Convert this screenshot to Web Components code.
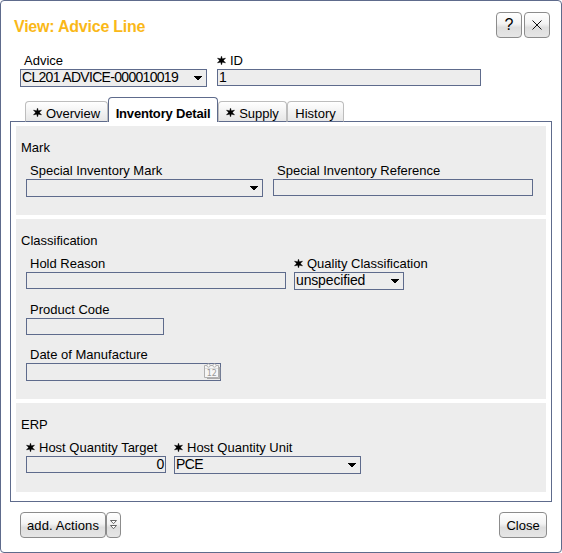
<!DOCTYPE html>
<html lang="en">
<head>
<meta charset="utf-8">
<title>View: Advice Line</title>
<style>
html,body{margin:0;height:100%;background:#fff}
body{font:13px/16px "Liberation Sans",Arial,sans-serif;color:#000;overflow:hidden}
</style>
</head>
<body>
<dialog-window heading="View: Advice Line">
  <push-button slot="tools" kind="icon">?</push-button>
  <push-button slot="tools" kind="icon" icon="close"></push-button>
  <form-row slot="head">
    <form-field label="Advice" value="CL201 ADVICE-000010019" type="select" style="--w:187px;--ls:-.69px"></form-field>
    <form-field label="ID" required value="1" style="--w:264px"></form-field>
  </form-row>
  <tab-bar slot="tabs">
    <tab-item required style="--w:83px">Overview</tab-item>
    <tab-item active style="--w:110px">Inventory Detail</tab-item>
    <tab-item required style="--w:69px">Supply</tab-item>
    <tab-item style="--w:57px">History</tab-item>
  </tab-bar>
  <group-box heading="Mark" style="--h:89px">
    <form-row style="--gap:10px">
      <form-field label="Special Inventory Mark" type="select" style="--w:237px"></form-field>
      <form-field label="Special Inventory Reference" style="--w:260px"></form-field>
    </form-row>
  </group-box>
  <group-box heading="Classification" style="--h:180px">
    <form-row style="--gap:8px;--rh:46px">
      <form-field label="Hold Reason" style="--w:260px"></form-field>
      <form-field label="Quality Classification" required value="unspecified" type="select" style="--w:110px;--ls:-.15px"></form-field>
    </form-row>
    <form-row style="--rh:45px"><form-field label="Product Code" style="--w:138px"></form-field></form-row>
    <form-row><form-field label="Date of Manufacture" type="date" style="--w:195px"></form-field></form-row>
  </group-box>
  <group-box heading="ERP" style="--h:89px">
    <form-row style="--gap:8px">
      <form-field label="Host Quantity Target" required value="0" style="--w:140px;--align:flex-end"></form-field>
      <form-field label="Host Quantity Unit" required value="PCE" type="select" style="--w:187px;--ls:-.6px"></form-field>
    </form-row>
  </group-box>
  <push-button slot="actions" style="--w:86px;letter-spacing:.1px">add. Actions</push-button>
  <push-button slot="actions" icon="more" style="--w:15px"></push-button>
  <push-button slot="close" style="--w:48px">Close</push-button>
</dialog-window>

<script>
const star = '<svg class="star" width="9" height="9" viewBox="0 0 9 9"><path d="M4.5 0 5.4 2.8 8.6 2.1 6.5 4.5 8.6 6.9 5.4 6.2 4.5 9 3.6 6.2.4 6.9 2.5 4.5.4 2.1 3.6 2.8Z" fill="#000" stroke="#000" stroke-width=".35"/></svg>';

function define(name, render) {
  customElements.define(name, class extends HTMLElement {
    connectedCallback() {
      if (!this.shadowRoot) this.attachShadow({mode: 'open'}).innerHTML = render(this);
    }
  });
}

define('dialog-window', el => `<style>
:host{display:flex;flex-direction:column;box-sizing:border-box;width:562px;height:553px;border:1px solid #5e6b8c;border-radius:4px;background:#fff}
header{display:flex;justify-content:space-between;height:52px;padding:11px 11px 0 13px;box-sizing:border-box}
h1{margin:5px 0 0;font-size:16px;line-height:20px;font-weight:bold;letter-spacing:-.23px;color:#fab818}
.tools{display:flex;gap:2px}
.head{height:44px;padding-left:19px}
.tabs{height:24px;padding-left:24px}
main{display:flex;flex-direction:column;gap:4px;box-sizing:border-box;width:542px;height:381px;margin-left:9px;padding:4px 5px;border:1px solid #5e6b8c}
footer{display:flex;justify-content:space-between;padding:10px 14px 0 19px}
.actions{display:flex}
</style>
<header><h1>${el.getAttribute('heading')}</h1><div class="tools"><slot name="tools"></slot></div></header>
<div class="head"><slot name="head"></slot></div>
<div class="tabs"><slot name="tabs"></slot></div>
<main><slot></slot></main>
<footer><div class="actions"><slot name="actions"></slot></div><slot name="close"></slot></footer>`);

define('tab-bar', () => `<style>
:host{display:flex;align-items:flex-end;height:25px;position:relative;z-index:1}
</style><slot></slot>`);

define('tab-item', el => {
  const on = el.hasAttribute('active');
  return `<style>
:host{display:flex;align-items:center;justify-content:center;box-sizing:border-box;width:var(--w);height:${on ? 25 : 21}px;padding-top:${on ? 7 : 4}px;
border:1px solid ${on ? '#5e6b8c' : '#bdbdbd'};border-bottom:${on ? 'none' : '1px solid #5e6b8c'};border-radius:4px 4px 0 0;
background:${on ? '#fff' : 'linear-gradient(#fff,#e6e6e6)'};${on ? 'font-weight:bold;letter-spacing:-.18px;' : ''}white-space:nowrap}
.star{flex:none;margin-right:4px;margin-top:-3px}
</style>${el.hasAttribute('required') ? star : ''}<slot></slot>`;
});

define('group-box', el => `<style>
:host{display:block;box-sizing:border-box;height:var(--h);padding:14px 0 0 5px;background:#ededed}
.t{height:23px}
.rows{padding-left:5px}
</style><div class="t">${el.getAttribute('heading')}</div><div class="rows"><slot></slot></div>`);

define('form-row', () => `<style>
:host{display:flex;align-items:flex-start;gap:var(--gap,10px);height:var(--rh,auto)}
</style><slot></slot>`);

define('form-field', el => {
  const type = el.getAttribute('type'), req = el.hasAttribute('required');
  const arrow = '<svg class="arrow" width="8" height="5" viewBox="0 0 8 5"><path d="M0 0H8V1H7V2H6V3H5V4H3V3H2V2H1V1H0Z"/></svg>';
  const cal = `<svg class="cal" width="17" height="17" viewBox="0 0 17 17">
<path d="M3 15.4H15.6V4" fill="none" stroke="#aaa" stroke-width="1.4"/><path d="M.5 2.5H14.5V14.5H.5Z" fill="#f6f6f6" stroke="#b0b0b0"/>
<path d="M1 5.5H14" stroke="#ddd"/><circle cx="4.5" cy="2.5" r="1.6" fill="#fff" stroke="#b0b0b0"/><circle cx="10.5" cy="2.5" r="1.6" fill="#fff" stroke="#b0b0b0"/>
<text x="7.8" y="13" text-anchor="middle" font-family="DejaVu Sans" font-size="8" fill="#999">12</text></svg>`;
  return `<style>
:host{display:block;width:var(--w)}
.l{display:flex;height:16px;padding-left:${req ? 0 : 4}px;white-space:nowrap}
.star{flex:none;margin:3px 4px 0 0}
.b{display:flex;box-sizing:border-box;height:${type ? 18 : 17}px;border:1px solid #5e6b8c;background:#ededed;padding:0 1px;justify-content:var(--align,flex-start);white-space:nowrap}
.v{font-size:14px;line-height:15px;letter-spacing:var(--ls,-.3px)}
.arrow{margin:6px 3px 0 auto}
.cal{margin:-1px -2px 0 auto}
</style><div class="l">${req ? star : ''}<span>${el.getAttribute('label')}</span></div>
<div class="b"><span class="v">${el.getAttribute('value') || ''}</span>${type === 'select' ? arrow : type === 'date' ? cal : ''}</div>`;
});

define('push-button', el => {
  const icon = el.getAttribute('icon'), small = el.getAttribute('kind') === 'icon';
  const art = icon === 'close'
    ? '<svg width="10" height="10" viewBox="0 0 10 10"><path d="M.5.5 9.5 9.5M9.5.5.5 9.5" stroke="#111" stroke-width="1"/></svg>'
    : icon === 'more'
    ? '<svg width="7" height="10" viewBox="0 0 7 10"><path d="M.5.5H6.5L3.5 3.7ZM.5 5.5H6.5L3.5 8.7Z" fill="#fff" stroke="#555" stroke-width=".9"/></svg>'
    : '<slot></slot>';
  return `<style>
:host{display:flex;align-items:center;justify-content:center;box-sizing:border-box;width:${small ? '26px' : 'var(--w)'};height:26px;border:1px solid #8c8c8c;border-radius:4px;
background:linear-gradient(#fff,#f3f3f3 45%,#dedede 60%,#e6e6e6);white-space:nowrap;${small ? 'font-size:16px;' : icon ? '' : 'padding-top:1px;'}}
svg{display:block}
</style>${art}`;
});
</script>
</body>
</html>
